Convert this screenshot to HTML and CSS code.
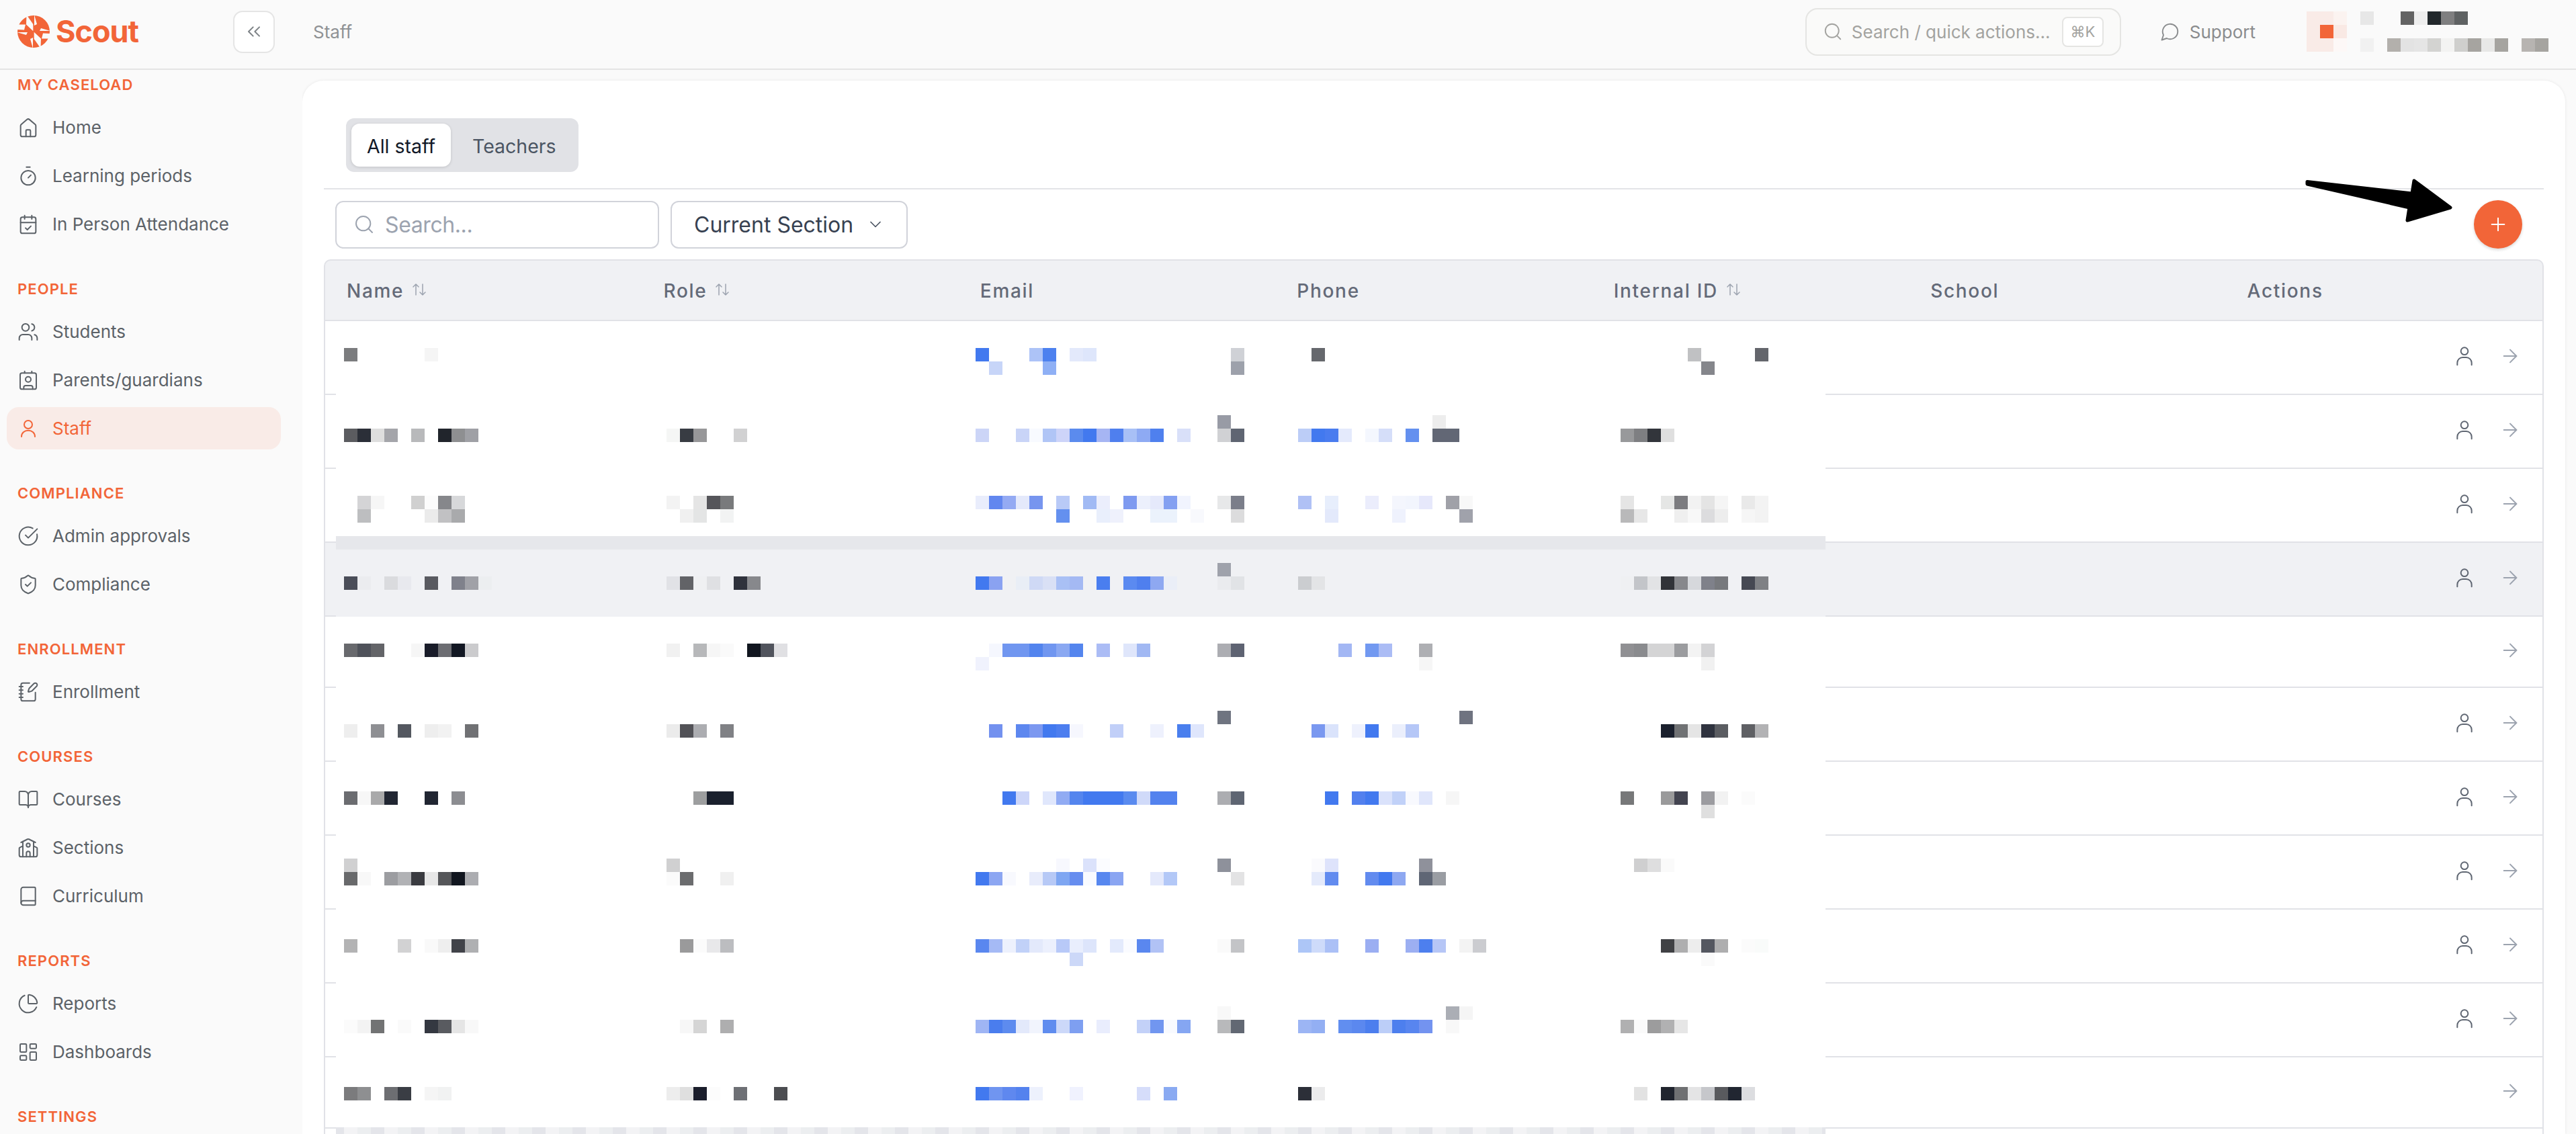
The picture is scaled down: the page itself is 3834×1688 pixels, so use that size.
FILE: index.html
```html
<!DOCTYPE html>
<html lang="en">
<head>
<meta charset="utf-8">
<title>Staff – Scout</title>
<link rel="stylesheet" href="styles.css">
</head>
<body>
<svg class="sprite" width="0" height="0" aria-hidden="true">
  <symbol id="i-home" viewBox="0 0 24 24"><path d="M3.500 10a2 2 0 0 1 .7-1.500l6.500-5.600a2 2 0 0 1 2.600 0l6.500 5.600a2 2 0 0 1 .7 1.500v10a2 2 0 0 1-2 2H5.500a2 2 0 0 1-2-2z"/><path d="M14.500 22v-6.500a1 1 0 0 0-1-1h-3a1 1 0 0 0-1 1V22"/></symbol>
  <symbol id="i-timer" viewBox="0 0 24 24"><path d="M10 2h4"/><path d="m12 14 3-3"/><circle cx="12" cy="14" r="8"/></symbol>
  <symbol id="i-cal" viewBox="0 0 24 24"><rect x="3.500" y="4" width="17" height="18" rx="2"/><path d="M8 2v4M16 2v4M3.500 10h17"/><path d="m9 16 2 2 4-4"/></symbol>
  <symbol id="i-users" viewBox="0 0 24 24"><path d="M16 21v-2a4 4 0 0 0-4-4H6a4 4 0 0 0-4 4v2"/><circle cx="9" cy="7" r="4"/><path d="M22 21v-2a4 4 0 0 0-3-3.870"/><path d="M16 3.130a4 4 0 0 1 0 7.750"/></symbol>
  <symbol id="i-contact" viewBox="0 0 24 24"><path d="M16 2v2M8 2v2"/><path d="M7 22v-2a2 2 0 0 1 2-2h6a2 2 0 0 1 2 2v2"/><circle cx="12" cy="11" r="3"/><rect x="3" y="4" width="18" height="18" rx="2"/></symbol>
  <symbol id="i-user" viewBox="0 0 24 24"><path d="M4.500 21c0-4 3.300-7 7.500-7s7.500 3 7.500 7"/><circle cx="12" cy="7.500" r="4.500"/></symbol>
  <symbol id="i-approve" viewBox="0 0 24 24"><path d="M21.800 10A10 10 0 1 1 17 3.340"/><path d="m9 11 3 3L22 4"/></symbol>
  <symbol id="i-shield" viewBox="0 0 24 24"><path d="M20 13c0 5-3.500 7.500-7.660 8.950a1 1 0 0 1-.67-.01C7.500 20.500 4 18 4 13V6a1 1 0 0 1 1-1c2 0 4.500-1.200 6.240-2.720a1.170 1.170 0 0 1 1.520 0C14.510 3.810 17 5 19 5a1 1 0 0 1 1 1z"/><path d="m9 12 2 2 4-4"/></symbol>
  <symbol id="i-notebook" viewBox="0 0 24 24"><path d="M13.400 2H6a2 2 0 0 0-2 2v16a2 2 0 0 0 2 2h12a2 2 0 0 0 2-2v-7.400"/><path d="M2 6h4M2 10h4M2 14h4M2 18h4"/><path d="M21.380 5.630a1 1 0 1 0-3-3l-5.010 5a2 2 0 0 0-.51.860l-.84 2.870a.5.5 0 0 0 .62.62l2.870-.84a2 2 0 0 0 .85-.51z"/></symbol>
  <symbol id="i-book-open" viewBox="0 0 24 24"><path d="M12 7v14"/><path d="M3 18a1 1 0 0 1-1-1V4a1 1 0 0 1 1-1h5a4 4 0 0 1 4 4 4 4 0 0 1 4-4h5a1 1 0 0 1 1 1v13a1 1 0 0 1-1 1h-6a3 3 0 0 0-3 3 3 3 0 0 0-3-3z"/></symbol>
  <symbol id="i-school" viewBox="0 0 24 24"><path d="M14 22v-4a2 2 0 1 0-4 0v4"/><path d="m18 10 3.450 1.720a1 1 0 0 1 .55.900V20a2 2 0 0 1-2 2H4a2 2 0 0 1-2-2v-7.380a1 1 0 0 1 .55-.9L6 10"/><path d="M18 5v17M6 5v17"/><path d="m4 6 7.100-3.550a2 2 0 0 1 1.800 0L20 6"/><circle cx="12" cy="9" r="2"/></symbol>
  <symbol id="i-book" viewBox="0 0 24 24"><path d="M4 19.500v-15A2.500 2.500 0 0 1 6.500 2H19a1 1 0 0 1 1 1v18a1 1 0 0 1-1 1H6.500a2.500 2.500 0 0 1-2.500-2.500"/><path d="M4 19.500A2.500 2.500 0 0 1 6.500 17H20"/></symbol>
  <symbol id="i-pie" viewBox="0 0 24 24"><path d="M21 12c.55 0 1-.45.95-1a10 10 0 0 0-8.950-8.950c-.55-.05-1 .4-1 .95v8a1 1 0 0 0 1 1z"/><path d="M21.210 15.890A10 10 0 1 1 8 2.830"/></symbol>
  <symbol id="i-dash" viewBox="0 0 24 24"><rect x="3" y="3" width="7" height="9" rx="1"/><rect x="14" y="3" width="7" height="5" rx="1"/><rect x="14" y="12" width="7" height="9" rx="1"/><rect x="3" y="16" width="7" height="5" rx="1"/></symbol>
  <symbol id="i-search" viewBox="0 0 24 24"><circle cx="11" cy="11" r="8"/><path d="m21 21-4.300-4.300"/></symbol>
  <symbol id="i-chat" viewBox="0 0 24 24"><path d="M7.900 20A9 9 0 1 0 4 16.100L2 22Z"/></symbol>
  <symbol id="i-collapse" viewBox="0 0 24 24"><path d="m11 17-5-5 5-5"/><path d="m18 17-5-5 5-5"/></symbol>
  <symbol id="i-chevron" viewBox="0 0 24 24"><path d="m6 9 6 6 6-6"/></symbol>
  <symbol id="i-sort" viewBox="0 0 24 24"><path d="m3 8 4-4 4 4M7 4v16"/><path d="m21 16-4 4-4-4M17 20V4"/></symbol>
  <symbol id="i-plus" viewBox="0 0 24 24"><path d="M5 12h14M12 5v14"/></symbol>
  <symbol id="i-arrow" viewBox="0 0 24 24"><path d="M5 12h14"/><path d="m12 5 7 7-7 7"/></symbol>
  <symbol id="i-person" viewBox="0 0 24 24"><circle cx="12" cy="6.500" r="4"/><path d="M4 22v-2.500a6 6 0 0 1 6-6h4a6 6 0 0 1 6 6V22"/></symbol>
</svg>

<div class="app">
  <header class="topbar">
    <a class="brand">
      <svg class="brand-mark" viewBox="-24 -24 48 48" aria-hidden="true">
        <circle class="brand-disc" r="24"/>
        <g class="brand-cuts">
          <path d="M-10.500-25-.7-11V-.7L-11-10.500z"/>
          <path d="M10.500 25 .7 11V.7L11 10.500z"/>
          <path d="M-25-10.500H-12L-14-2.500-25-3z"/>
          <path d="M25 10.500H12L14 2.500 25 3z"/>
          <path d="M1-25 5-11 1-9z"/>
          <path d="M-1 25-5 11-1 9z"/>
          <path d="M25-1 11-5 9-1z"/>
          <path d="M-25 1-11 5-9 1z"/>
        </g>
      </svg>
      <span class="brand-name">Scout</span>
    </a>
    <button class="collapse-btn"><svg class="icon icon-collapse"><use href="#i-collapse"/></svg></button>
    <span class="crumb">Staff</span>
    <div class="top-right">
      <div class="quick-search">
        <svg class="icon icon-quick"><use href="#i-search"/></svg>
        <span class="quick-text">Search / quick actions...</span>
        <kbd class="kbd">⌘K</kbd>
      </div>
      <div class="support"><svg class="icon icon-chat"><use href="#i-chat"/></svg><span>Support</span></div>
      <svg class="avatar-mosaic" id="avatar" width="360" height="60" shape-rendering="crispEdges" aria-hidden="true"></svg>
    </div>
  </header>

  <aside class="sidebar">
    <section class="nav-section">
      <h2 class="nav-title">MY CASELOAD</h2>
      <a class="nav-item"><svg class="icon"><use href="#i-home"/></svg>Home</a>
      <a class="nav-item"><svg class="icon"><use href="#i-timer"/></svg>Learning periods</a>
      <a class="nav-item"><svg class="icon"><use href="#i-cal"/></svg>In Person Attendance</a>
    </section>
    <section class="nav-section">
      <h2 class="nav-title">PEOPLE</h2>
      <a class="nav-item"><svg class="icon"><use href="#i-users"/></svg>Students</a>
      <a class="nav-item"><svg class="icon"><use href="#i-contact"/></svg>Parents/guardians</a>
      <a class="nav-item is-active"><svg class="icon"><use href="#i-user"/></svg>Staff</a>
    </section>
    <section class="nav-section">
      <h2 class="nav-title">COMPLIANCE</h2>
      <a class="nav-item"><svg class="icon"><use href="#i-approve"/></svg>Admin approvals</a>
      <a class="nav-item"><svg class="icon"><use href="#i-shield"/></svg>Compliance</a>
    </section>
    <section class="nav-section">
      <h2 class="nav-title">ENROLLMENT</h2>
      <a class="nav-item"><svg class="icon"><use href="#i-notebook"/></svg>Enrollment</a>
    </section>
    <section class="nav-section">
      <h2 class="nav-title">COURSES</h2>
      <a class="nav-item"><svg class="icon"><use href="#i-book-open"/></svg>Courses</a>
      <a class="nav-item"><svg class="icon"><use href="#i-school"/></svg>Sections</a>
      <a class="nav-item"><svg class="icon"><use href="#i-book"/></svg>Curriculum</a>
    </section>
    <section class="nav-section">
      <h2 class="nav-title">REPORTS</h2>
      <a class="nav-item"><svg class="icon"><use href="#i-pie"/></svg>Reports</a>
      <a class="nav-item"><svg class="icon"><use href="#i-dash"/></svg>Dashboards</a>
    </section>
    <section class="nav-section">
      <h2 class="nav-title">SETTINGS</h2>
    </section>
  </aside>

  <main class="main">
    <div class="card">
      <div class="tabs">
        <button class="tab is-active">All staff</button>
        <button class="tab">Teachers</button>
      </div>
      <hr class="rule">
      <div class="filters">
        <div class="field field-search">
          <svg class="icon icon-field"><use href="#i-search"/></svg>
          <span class="placeholder">Search...</span>
        </div>
        <div class="field field-select">
          <span>Current Section</span>
          <svg class="icon icon-select"><use href="#i-chevron"/></svg>
        </div>
        <button class="add-btn"><svg class="icon icon-plus"><use href="#i-plus"/></svg></button>
      </div>
      <div class="table">
        <div class="thead">
          <div class="th">Name<svg class="icon icon-sort"><use href="#i-sort"/></svg></div>
          <div class="th">Role<svg class="icon icon-sort"><use href="#i-sort"/></svg></div>
          <div class="th">Email</div>
          <div class="th">Phone</div>
          <div class="th">Internal ID<svg class="icon icon-sort"><use href="#i-sort"/></svg></div>
          <div class="th">School</div>
          <div class="th">Actions</div>
        </div>
        <div class="tbody">
          <div class="row"><svg class="icon icon-person"><use href="#i-person"/></svg><svg class="icon icon-go"><use href="#i-arrow"/></svg></div>
          <div class="row"><svg class="icon icon-person"><use href="#i-person"/></svg><svg class="icon icon-go"><use href="#i-arrow"/></svg></div>
          <div class="row"><svg class="icon icon-person"><use href="#i-person"/></svg><svg class="icon icon-go"><use href="#i-arrow"/></svg></div>
          <div class="row is-hover"><svg class="icon icon-person"><use href="#i-person"/></svg><svg class="icon icon-go"><use href="#i-arrow"/></svg></div>
          <div class="row row-short"><svg class="icon icon-go"><use href="#i-arrow"/></svg></div>
          <div class="row"><svg class="icon icon-person"><use href="#i-person"/></svg><svg class="icon icon-go"><use href="#i-arrow"/></svg></div>
          <div class="row"><svg class="icon icon-person"><use href="#i-person"/></svg><svg class="icon icon-go"><use href="#i-arrow"/></svg></div>
          <div class="row"><svg class="icon icon-person"><use href="#i-person"/></svg><svg class="icon icon-go"><use href="#i-arrow"/></svg></div>
          <div class="row"><svg class="icon icon-person"><use href="#i-person"/></svg><svg class="icon icon-go"><use href="#i-arrow"/></svg></div>
          <div class="row"><svg class="icon icon-person"><use href="#i-person"/></svg><svg class="icon icon-go"><use href="#i-arrow"/></svg></div>
          <div class="row row-short"><svg class="icon icon-go"><use href="#i-arrow"/></svg></div>
          <div class="row"></div>
          <svg class="redaction" id="redaction" width="2217" height="1210" shape-rendering="crispEdges" aria-hidden="true"></svg>
        </div>
      </div>
      <svg class="pointer" width="240" height="80" viewBox="0 0 240 80" aria-hidden="true">
        <path d="M9 10.500 165 28 168 9 222 49 158 68 161 49 9 14z"/>
      </svg>
    </div>
  </main>
</div>
<script src="script.js"></script>
</body>
</html>
```
FILE: styles.css
```css
* { box-sizing: border-box; }
html, body { margin: 0; height: 100%; }
body {
  width: 3834px;
  height: 1688px;
  overflow: hidden;
  background: #fafafa;
  font-family: Inter, "Liberation Sans", sans-serif;
  color: #5c6268;
}
.sprite { position: absolute; }
.icon {
  fill: none;
  stroke: currentColor;
  stroke-width: 1.5;
  stroke-linecap: round;
  stroke-linejoin: round;
  flex: none;
}
.app {
  display: grid;
  grid-template-columns: 450px 1fr;
  grid-template-rows: 104px 1fr;
  width: 3834px;
  height: 1688px;
}

/* top bar */
.topbar {
  grid-column: 1 / -1;
  display: flex;
  align-items: center;
  padding: 0 41px 8px 26px;
  background: #fafafa;
  border-bottom: 2px solid #e4e4e4;
  height: 104px;
}
.brand { display: flex; align-items: center; gap: 9px; width: 321px; }
.brand-mark { width: 48px; height: 48px; flex: none; }
.brand-disc { fill: #f26538; }
.brand-cuts { fill: #fafafa; }
.brand-name {
  font-size: 45px;
  line-height: 48px;
  font-weight: 700;
  letter-spacing: -1px;
  color: #f26538;
}
.collapse-btn {
  width: 62px;
  height: 63px;
  padding: 0;
  display: flex;
  align-items: center;
  justify-content: center;
  background: #fff;
  border: 2px solid #e5e5e5;
  border-radius: 14px;
  color: #7d8286;
}
.icon-collapse { width: 32px; height: 32px; }
.crumb { margin-left: 57px; font-size: 26px; color: #8f9295; }
.top-right { margin-left: auto; display: flex; align-items: center; }
.quick-search {
  width: 470px;
  height: 71px;
  display: flex;
  align-items: center;
  padding: 0 24px;
  background: #fafaf9;
  border: 2px solid #e5e5e3;
  border-radius: 18px;
  color: #a3a3a0;
}
.icon-quick { width: 30px; height: 30px; margin-right: 13px; }
.quick-text { font-size: 26px; white-space: nowrap; }
.kbd {
  margin-left: auto;
  width: 62px;
  height: 45px;
  display: flex;
  align-items: center;
  justify-content: center;
  background: #fff;
  border: 2px solid #e5e5e3;
  border-radius: 8px;
  font-family: Inter, "DejaVu Sans", sans-serif;
  font-size: 22px;
  color: #a3a3a0;
}
.support {
  margin-left: 58px;
  display: flex;
  align-items: center;
  gap: 14px;
  font-size: 26px;
  color: #8a8c8e;
}
.icon-chat { width: 30px; height: 30px; }
.avatar-mosaic { margin-left: 76px; flex: none; }

/* sidebar */
.sidebar {
  padding: 8px 32px 0 10px;
  overflow: hidden;
  background: #fafafa;
}
.nav-section { display: flex; flex-direction: column; gap: 9px; margin-bottom: 51px; }
.nav-title {
  margin: 0 0 9px 16px;
  height: 28px;
  font-size: 22px;
  line-height: 28px;
  font-weight: 600;
  letter-spacing: 1.1px;
  color: #f26538;
}
.nav-item {
  height: 63px;
  display: flex;
  align-items: center;
  gap: 20px;
  padding-left: 16px;
  border-radius: 18px;
  font-size: 26px;
  color: #5c6268;
}
.nav-item .icon { width: 32px; height: 32px; }
.nav-item.is-active { background: #f9ebe7; color: #f26538; }

/* main */
.main { padding: 16px 16px 0 0; overflow: hidden; min-width: 0; }
.card {
  position: relative;
  height: 100%;
  padding: 56px 32px 0;
  overflow: hidden;
  background: #fff;
  border-radius: 32px 32px 0 0;
  box-shadow: 0 0 4px rgba(0, 0, 0, .08);
}
.tabs {
  display: inline-flex;
  align-items: center;
  height: 80px;
  width: 346px;
  margin-left: 33px;
  padding: 0 8px;
  background: #e1e2e6;
  border-radius: 12px;
}
.tab {
  height: 64px;
  padding: 2px 0 0;
  border: 0;
  background: none;
  border-radius: 12px;
  font: 400 28.5px Inter, sans-serif;
  white-space: nowrap;
  color: #4b5563;
}
.tab.is-active {
  width: 148px;
  margin-right: 32px;
  background: #fff;
  color: #111827;
  box-shadow: 0 1px 4px rgba(0, 0, 0, .14);
}
.rule {
  height: 2px;
  margin: 24px 0 16px;
  border: 0;
  background: #e3e4e7;
}
.filters {
  display: flex;
  align-items: center;
  gap: 17px;
  height: 72px;
  padding: 0 32px 0 17px;
}
.field {
  height: 71px;
  display: flex;
  align-items: center;
  background: #fff;
  border: 2px solid #d1d3da;
  border-radius: 12px;
  font-size: 32px;
  line-height: 36px;
}
.field span { padding-top: 2px; }
.field-search { width: 482px; padding-left: 25px; color: #9ca3af; }
.placeholder { letter-spacing: -.4px; }
.icon-field { width: 32px; height: 32px; margin-right: 15px; }
.field-select { width: 353px; padding-left: 33px; color: #374151; }
.icon-select { width: 28px; height: 28px; margin-left: 19px; color: #4b5563; }
.add-btn {
  margin-left: auto;
  width: 72px;
  height: 72px;
  padding: 0;
  display: flex;
  align-items: center;
  justify-content: center;
  background: #f26538;
  border: 0;
  border-radius: 50%;
  color: #fff;
  box-shadow: 0 2px 4px rgba(0, 0, 0, .16);
}
.icon-plus { width: 32px; height: 32px; }

/* table */
.table { margin-top: 16px; }
.thead {
  display: grid;
  grid-template-columns: repeat(7, 1fr);
  height: 92px;
  padding-top: 2px;
  background: #f0f1f4;
  border: 2px solid #e1e2e7;
  border-radius: 10px 10px 0 0;
}
.th {
  display: flex;
  align-items: center;
  gap: 11px;
  padding-left: 32px;
  font-size: 28px;
  font-weight: 500;
  letter-spacing: 1.7px;
  color: #646a78;
}
.icon-sort { width: 24px; height: 24px; color: #9ca3af; margin-top: -4px; }
.tbody { position: relative; border-left: 2px solid #e1e2e7; border-right: 2px solid #e1e2e7; }
.row {
  height: 110px;
  display: flex;
  align-items: center;
  justify-content: flex-end;
  gap: 36px;
  padding: 0 32px 4px 0;
  border-bottom: 2px solid #e1e2e7;
}
.row-short { height: 106px; }
.row.is-hover { background: #f0f1f4; }
.icon-person { width: 32px; height: 32px; color: #5f6672; }
.icon-go { width: 32px; height: 32px; color: #9ca3af; }
.redaction { position: absolute; left: 16px; top: 0; }
.pointer { position: absolute; left: 2975px; top: 140px; }
.pointer path { fill: #000; stroke: #000; stroke-width: 5; stroke-linejoin: round; }
```
FILE: script.js
```js
// Pixelated (redacted) regions of the table and the account block.
// Each entry: [grid row, "column hex, column hex, ..."]
var TABLE = [
  [2,"0 7b7c7e,6 f5f5f5,47 4279ef,51 adc3f7,52 4d81ef,54 e3e9fb,55 dee6fb,66 cfd1d6,72 66686d,100 c0c1c3,105 64666c"],
  [3,"48 c7d5f8,52 8fb0f5,66 9da1ab,101 85868b"],
  [7,"65 989ba5,81 ededed"],
  [8,"0 5b5c60,1 2b2f38,2 dedede,3 a4a5aa,5 b8b9bb,7 21252c,8 8e8f91,9 9fa0a5,24 f5f6f5,25 383c43,26 979799,29 d1d1d2,47 ccd5f7,50 c9d4f7,51 f8faff,52 b0c5f6,53 cdd4f9,54 5b8bee,55 4279ef,56 a6b5f3,57 4f7fee,58 a8c0f6,59 8eaaf3,60 4f80ee,62 d9e0f9,65 d0d1d4,66 5f6572,71 bccdf7,72 4279ef,73 4a7cef,74 e4eafc,76 f4f7fe,77 d5def9,79 6490ef,81 626775,82 626775,95 98999b,96 7e7f82,97 32353b,98 dfdfdf"],
  [13,"1 d4d4d6,2 f6f6f6,5 d0d0d0,6 fcfcfc,7 86878b,8 d7d8da,24 f3f3f3,26 e5e5e5,27 55555a,28 797a7c,47 e9edfc,48 6287ef,49 94aaf3,50 e4e9fb,51 7795ef,53 b9caf7,55 a1baf4,56 ebeefc,58 7e9af0,59 ecf0fc,60 e5e9fb,61 84a0f1,62 f1f4fe,65 e7e8e9,66 7b7e8a,71 b0c1f5,73 e7eefc,76 ebedfc,78 f4f6fd,79 f2f5fd,80 e6e8fb,82 a0a1a8,83 f8f8f8,95 e5e5e5,98 e5e6e5,99 7c7c80,100 f2f2f2,101 e4e4e4,102 f5f5f5,104 e9e9e9,105 f3f3f3"],
  [14,"1 bdbec0,6 ebebeb,7 c1c1c3,8 a9aaac,25 f0f0f0,26 e4e5e5,28 f2f3f3,53 6490ef,56 e9effc,57 eff1fc,60 ebf2fc,61 ebf2fc,63 f8f9fd,66 dcdcdd,73 e3e9fb,78 eff2fd,83 a0a2ab,95 b9b9ba,96 e7e7e7,99 efefef,100 f8f8f8,101 dcdcde,102 ededed,104 f6f6f6,105 f3f3f3"],
  [18,"65 9fa2ab"],
  [19,"0 4a4d58,1 ebecef,3 dadbde,4 e8e9ee,6 595a60,8 7f818b,9 a0a1a7,10 eceef0,24 e1e2e6,25 626367,26 eff0f2,27 dfe0e3,29 2f323c,30 87888c,47 4279ef,48 8aa2f1,50 e9eef6,51 cfd9f5,52 d9e0f5,53 a9c0f5,54 a4b9f3,56 4a7eef,58 5b8af0,59 4f7fee,60 8ea8f1,61 eaeef7,65 eaebee,66 e1e3e6,71 cbcdd0,72 e3e4e6,95 eff0f2,96 c3c5c9,97 e2e3e5,98 313338,99 87888c,100 d6d8dc,101 7f818a,102 77797d,104 464953,105 7f8185"],
  [24,"0 68696d,1 4f525a,2 636468,5 f6f6f6,6 191c29,7 6c6d72,8 121723,9 cbcbcd,24 f1f1f1,26 b7b8ba,27 f6f6f6,28 fafafa,30 11161f,31 51545d,32 e0e0e3,48 f5f7fe,49 7096f0,50 7096f0,51 5284ee,52 7096f0,53 8aa8f2,54 5485ee,56 abbcf5,58 dfe6fb,59 a1b8f3,65 acadb2,66 5e6372,74 a3b7f4,76 7299f1,77 abbcf5,80 aeafb3,95 909093,96 8a8b8e,97 d4d4d5,98 d4d4d5,99 9b9c9f,100 f3f3f3,101 d3d3d5"],
  [25,"47 f0f2fd,80 f6f6f6,101 f1f1f1"],
  [29,"65 6f7480,83 6f7380"],
  [30,"0 eeeeee,2 8e8f93,4 545860,6 eeeeee,7 f2f2f2,9 707174,24 ebebeb,25 525257,26 acadb1,28 808185,48 7391ef,50 5d87ef,51 7c98f0,52 4279ef,53 4d7eef,54 f6f7fe,57 c1cff8,60 eef1fd,62 4a7fee,63 dfe6fc,72 7a98f0,73 dae3fb,75 eef1fd,76 4279ef,78 ebeffc,79 b5c7f7,98 1a202d,99 707274,100 e5e5e5,101 2f333f,102 5b5d62,104 5f6064,105 b2b2b4"],
  [35,"0 6b6c70,1 f7f7f7,2 a9a9aa,3 212632,6 212632,8 8c8d91,26 9d9e9f,27 1a202d,28 1a202d,49 4279ef,50 cdd6f9,52 e0e7fc,53 91abf3,54 5485ee,55 4279ef,56 4279ef,57 4279ef,58 5a8bef,59 d0daf9,60 5382ee,61 5382ee,65 acadb1,66 5e6572,73 4279ef,75 5280ee,76 4279ef,77 dae2fb,78 c1d1f8,79 f8f9fe,80 e0e6fb,82 f6f6f6,95 777879,98 9a9a9b,99 434450,101 9c9ca0,102 f2f2f2,104 fbfbfb"],
  [36,"101 dfdfdf"],
  [40,"0 d0d0d1,24 d0d0d1,53 f7f8fe,55 dbe2fb,56 fbfcff,65 8e919b,72 fafafd,73 dee3fb,80 8f919b,96 cfcfd0,97 dededf,98 fafafa"],
  [41,"0 68696b,1 f8f8f8,3 9c9da1,4 b1b2b5,5 3a3b40,6 e7e7e7,7 555659,8 11161f,9 acadb1,24 fbfbfb,25 6b6c6e,28 f0f0f0,47 4279ef,48 8ca6f2,49 f8f9fe,51 e8ecfb,52 b7c9f6,53 7ea6f2,54 668def,55 f9fbff,56 5787ef,57 8aa5f2,60 e4e9fb,61 b3c8f7,66 e3e3e4,72 e4eafb,73 628bef,76 628bef,77 4279ef,78 8ea8f1,80 5f6675,81 9a9da3"],
  [46,"0 b3b3b4,4 d2d2d3,6 f9f9f9,7 eeeeee,8 414349,9 afb0b2,25 9a9a9b,26 fbfbfb,27 e8e8ea,28 bcbdc0,47 5a87ef,48 a5baf5,49 edf1fd,50 c1d1f8,51 e3e9fb,52 ecf0fd,53 b8c9f8,54 e9eefd,55 dde5fb,57 e3eafc,58 fafbff,59 5a87ef,60 b1c2f5,65 fafafa,66 c3c4c7,71 adc6f7,72 cedbfa,73 abc0f6,76 9baef2,79 9caff2,80 4d7fee,81 b6c6f6,83 f3f3f3,84 cbccd0,98 404144,99 aeaeaf,100 ededed,101 545760,102 aeaeaf,104 fbfbfb,105 f9fbfa"],
  [47,"54 ccd8f8,101 fafafa"],
  [51,"65 f8f8f8,82 abaeb5,83 f5f5f5"],
  [52,"0 fbfbfb,1 f3f3f3,2 727374,4 fafafa,6 343841,7 595b60,8 e5e5e5,9 f8f8f8,25 f7f7f7,26 d5d5d5,28 aeaeaf,47 9fb5f4,48 4a7dee,49 5d8bef,50 e3e9fb,51 f1f4fd,52 5f8cef,53 ccd8f9,54 7e9ff1,56 e9edfd,59 c3d1f8,60 7196f0,61 f8faff,62 85a6f2,65 b8b9bb,66 626873,71 9cb5f4,72 93aff3,74 618ef0,75 5b88ef,76 4c7eee,77 bccef8,78 4d7fee,79 5885ef,80 7393f0,82 f8f8f8,95 b0b0b1,96 fafafa,97 9c9c9d,98 b1b1b2,99 e6e6e6"],
  [57,"0 7b7b7d,1 8e8f91,3 6d6e72,4 3a3d44,6 f5f5f5,7 f1f2f2,24 ededed,25 dfdfdf,26 1a1d2b,27 fcfcfc,29 6e7075,32 4c4d51,47 4279ef,48 7095f0,49 5f88ef,50 5482ee,51 edf1fd,54 f0f2fe,59 d6ddfa,61 8aaaf2,71 2c2f38,72 ebebec,96 e2e2e2,98 20242e,99 6f7072,100 e4e4e5,101 c6c7cb,102 595a5e,103 212631,104 dcdde0"]
];

var ACCOUNT = [
  [0,"0 f9ebe7,1 f9ebe7,2 fbf3f0,4 e7e7e7,7 636363,8 eeeeee,9 22282c,10 7f7f80,11 5f6263"],
  [1,"0 f9ebe7,1 f26538,2 f9e9e4"],
  [2,"0 f9ebe7,1 f9ebe7,2 fdf8f7,4 f1f1f1,6 b3b0ac,7 e3e3e3,8 e5e5e5,9 d3d3d1,10 f3f3f2,11 cfcfcd,12 a6a4a0,13 e8e8e7,14 a6a4a0,16 b7b4b1,17 a6a4a0"]
];

var NS = "http://www.w3.org/2000/svg";

function rect(svg, x, y, w, h, fill) {
  var r = document.createElementNS(NS, "rect");
  r.setAttribute("x", x);
  r.setAttribute("y", y);
  r.setAttribute("width", w);
  r.setAttribute("height", h);
  r.setAttribute("fill", fill);
  svg.appendChild(r);
}

function paint(svg, rows, originX) {
  rows.forEach(function (row) {
    row[1].split(",").forEach(function (cell) {
      var parts = cell.split(" ");
      rect(svg, originX + parts[0] * 20, row[0] * 20, 20, 20, "#" + parts[1]);
    });
  });
}

var table = document.getElementById("redaction");
rect(table, 0, 0, 2217, 1210, "#fff");
rect(table, 0, 320, 2217, 20, "#e6e7eb");
rect(table, 0, 340, 2217, 100, "#f0f1f4");
var stripe = ["#f3f3f5", "#eceef0", "#e4e5ea"];
rect(table, 0, 1200, 12, 20, stripe[2]);
for (var c = 0; c < 111; c++) {
  rect(table, 12 + c * 20, 1200, 20, 20, stripe[c % 3]);
}
paint(table, TABLE, 12);
paint(document.getElementById("avatar"), ACCOUNT, 0);
```
